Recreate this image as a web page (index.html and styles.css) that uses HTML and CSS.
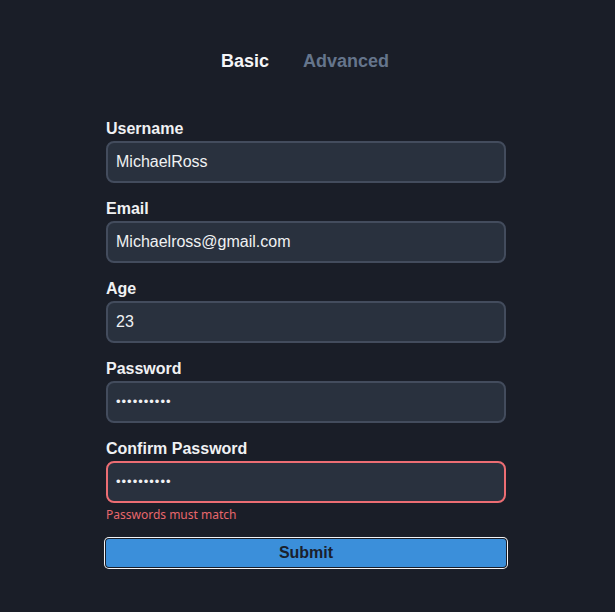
FILE: index.html
```html
<!DOCTYPE html>
<html>
<head>
<meta charset="utf-8">
<link rel="stylesheet" href="styles.css">
</head>
<body>
<div class="page">
  <div class="tabs">
    <div class="tab active">Basic</div>
    <div class="tab">Advanced</div>
  </div>
  <form class="form">
    <div class="field">
      <label class="label">Username</label>
      <div class="input">MichaelRoss</div>
    </div>
    <div class="field">
      <label class="label">Email</label>
      <div class="input">Michaelross@gmail.com</div>
    </div>
    <div class="field">
      <label class="label">Age</label>
      <div class="input">23</div>
    </div>
    <div class="field">
      <label class="label">Password</label>
      <div class="input dots">&#8226;&#8226;&#8226;&#8226;&#8226;&#8226;&#8226;&#8226;&#8226;&#8226;</div>
    </div>
    <div class="field">
      <label class="label">Confirm Password</label>
      <div class="input dots invalid">&#8226;&#8226;&#8226;&#8226;&#8226;&#8226;&#8226;&#8226;&#8226;&#8226;</div>
      <div class="error">Passwords must match</div>
    </div>
    <button type="button" class="submit">Submit</button>
  </form>
</div>
</body>
</html>
```
FILE: styles.css
```css
html, body {
  margin: 0;
  padding: 0;
  background: #1a1e28;
  height: 100%;
}
body {
  font-family: "Liberation Sans", Arial, sans-serif;
  color: #f0f1f3;
}
.page {
  width: 400px;
  margin-left: 106px;
  padding-top: 47px;
}
.tabs {
  display: flex;
  justify-content: center;
  gap: 34px;
  margin-bottom: 44px;
  padding-right: 2px;
}
.tab {
  font-size: 18px;
  font-weight: bold;
  line-height: 28px;
  color: #65758c;
}
.tab.active {
  color: #f4f5f7;
}
.form {
  display: flex;
  flex-direction: column;
  gap: 16px;
}
.field {
  display: flex;
  flex-direction: column;
}
.label {
  font-size: 16px;
  font-weight: bold;
  line-height: 20px;
  margin-bottom: 2px;
  color: #f0f1f3;
}
.input {
  box-sizing: border-box;
  height: 42px;
  border: 2px solid #434c5d;
  border-radius: 8px;
  background: #29313e;
  padding: 0 8px;
  font-size: 16px;
  line-height: 38px;
  color: #f0f1f3;
}
.dots {
  font-size: 13px;
  letter-spacing: 1px;
}
.invalid {
  border-color: #ec6d73;
}
.error {
  font-family: "Noto Sans", sans-serif;
  font-size: 12px;
  line-height: 16px;
  color: #e8676c;
  margin-top: 4px;
}
.submit {
  margin-top: 0;
  height: 28px;
  width: 400px;
  box-sizing: border-box;
  border: none;
  border-radius: 3px;
  background: #3b8fda;
  font-family: "Liberation Sans", Arial, sans-serif;
  font-size: 16px;
  font-weight: bold;
  color: #1a202c;
  padding: 0;
  box-shadow: 0 0 0 1px #1a1e28, 0 0 0 2px #f4f5f7;
}
```
